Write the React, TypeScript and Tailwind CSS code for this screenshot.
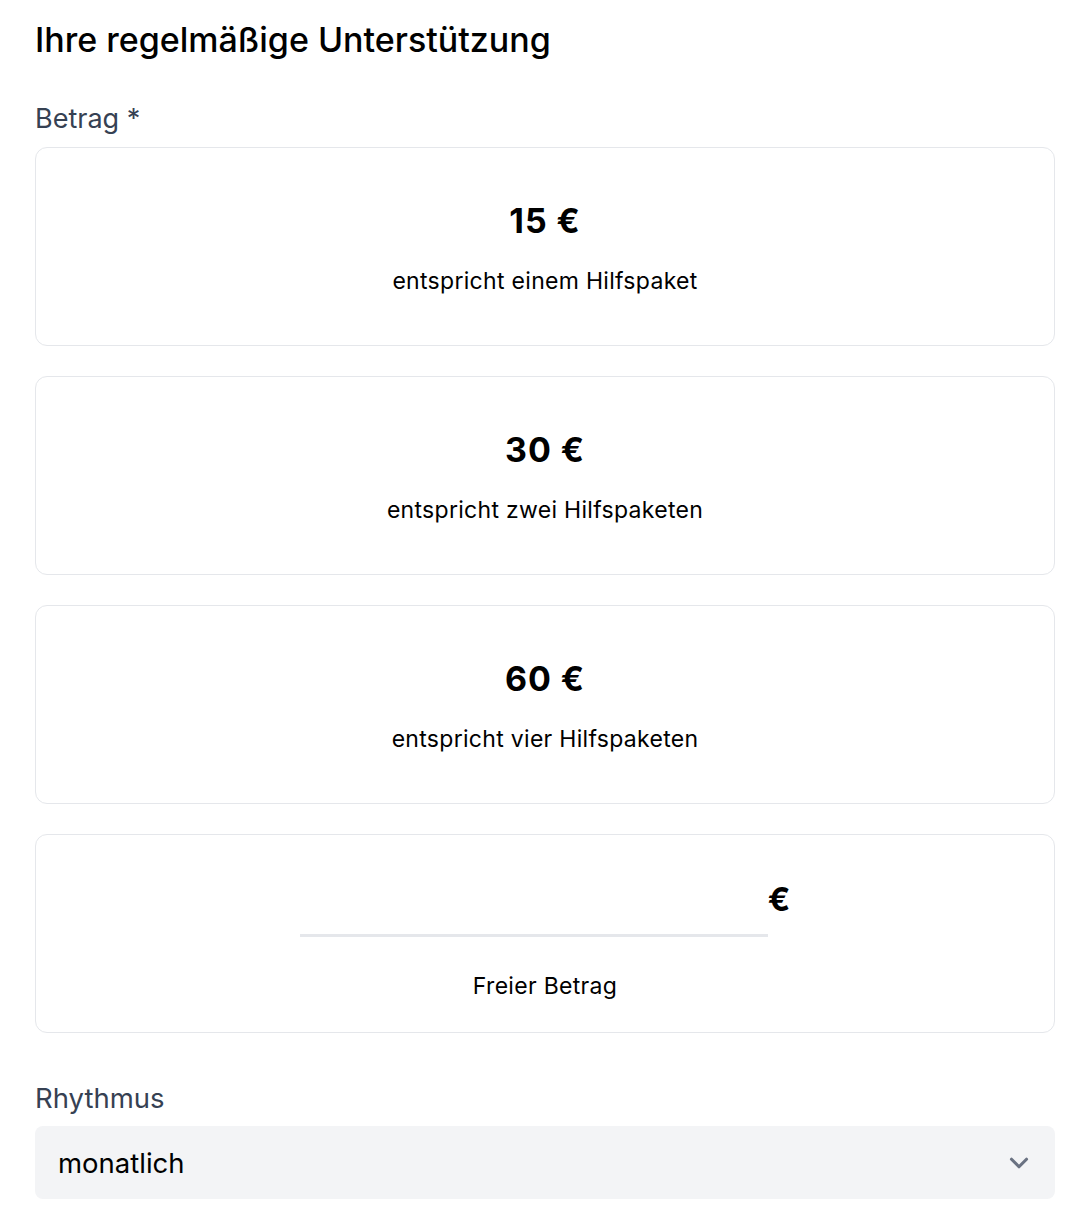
import { ChevronDown } from 'lucide-react'

const options = [
  { amount: '15 €', note: 'entspricht einem Hilfspaket' },
  { amount: '30 €', note: 'entspricht zwei Hilfspaketen' },
  { amount: '60 €', note: 'entspricht vier Hilfspaketen' },
]

export default function App() {
  return (
    <div className="min-h-screen bg-white pl-[35px] pr-[29px] pt-[18px] font-['Inter',sans-serif] text-black">
      <h1 className="text-[34px] leading-[44px] font-medium">Ihre regelmäßige Unterstützung</h1>

      <label className="block mt-[39px] text-[27px] leading-[36px] text-gray-700">Betrag *</label>

      <div className="mt-[10px] flex flex-col gap-[30px]">
        {options.map((o) => (
          <button
            key={o.amount}
            className="h-[199px] w-full rounded-xl border border-gray-200 bg-white flex flex-col items-center justify-center gap-[24px] pt-[4px]"
          >
            <span className="text-[34px] leading-[40px] font-bold tracking-[0.9px]">{o.amount}</span>
            <span className="text-[23px] leading-[32px] tracking-[0.3px]">{o.note}</span>
          </button>
        ))}

        <div className="h-[199px] w-full rounded-xl border border-gray-200 bg-white flex flex-col items-center pt-[41px]">
          <div className="flex items-center">
            <input
              type="text"
              aria-label="Freier Betrag"
              className="w-[468px] h-[61px] border-b-[3px] border-gray-200 bg-transparent outline-none text-center text-[31px] font-bold"
            />
            <span className="text-[33px] leading-[40px] font-bold -mt-[16px]">€</span>
          </div>
          <span className="mt-[33px] text-[23px] leading-[32px] tracking-[0.3px]">Freier Betrag</span>
        </div>
      </div>

      <label className="block mt-[47px] text-[27.5px] leading-[36px] text-gray-700">Rhythmus</label>

      <div className="mt-[10px] h-[73px] w-full rounded-lg bg-gray-100 flex items-center pl-[23px] pr-[21px]">
        <span className="flex-1 text-[27.5px] leading-[36px]">monatlich</span>
        <ChevronDown className="w-[30px] h-[30px] text-gray-500" strokeWidth={2.5} />
      </div>
    </div>
  )
}
